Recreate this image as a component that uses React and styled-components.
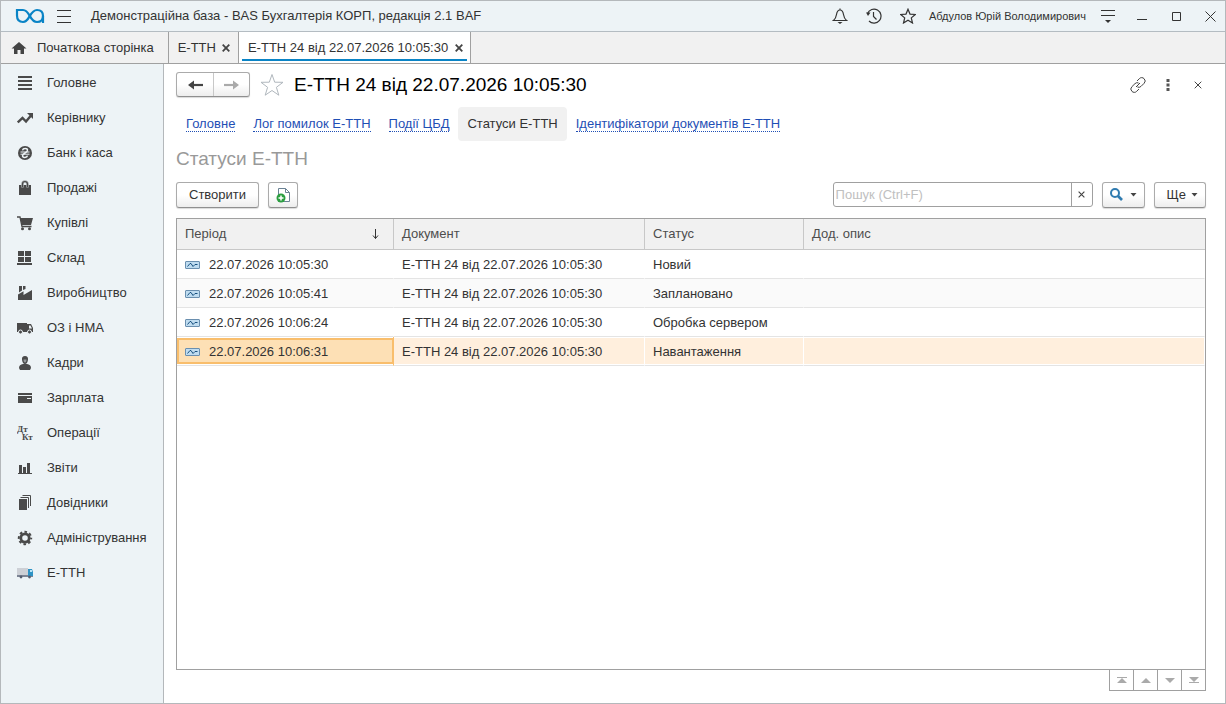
import React from 'react';
import styled, { createGlobalStyle, css } from 'styled-components';

const GlobalStyle = createGlobalStyle`
    * {
        box-sizing: border-box;
    }
    body {
        margin: 0;
        background: #fff;
        color: #333;
        font-family: "Liberation Sans", Arial, sans-serif;
        font-size: 13px;
        line-height: 16px;
    }
    button, input {
        font: inherit;
        color: inherit;
    }
    svg {
        display: block;
        flex: none;
    }
`;

const Window = styled.div`
    display: flex;
    flex-direction: column;
    min-height: 100vh;
    border: 1px solid #b4b8bb;
`;

const TitleBar = styled.header`
    display: flex;
    align-items: center;
    height: 31px;
    padding: 0 7px 0 14px;
    background: #edf3f6;
    border-bottom: 1px solid #b4bcc2;
`;

const AppName = styled.div`
    flex: 1;
    margin-left: 8px;
`;

const IconButton = styled.button`
    display: flex;
    align-items: center;
    justify-content: center;
    width: ${p => p.$width || 16}px;
    height: 20px;
    padding: 0;
    border: 0;
    background: transparent;
`;

const SystemIcons = styled.div`
    display: flex;
    align-items: center;
    gap: 18px;
`;

const UserName = styled.span`
    margin: 0 14px 0 13px;
    font-size: 11px;
`;

const Tabs = styled.nav`
    display: flex;
    height: 32px;
    background: #f1f1f1;
    border-bottom: 1px solid #a0a0a0;
`;

const Tab = styled.div`
    display: flex;
    align-items: center;
    gap: 6px;
    padding: 0 7px 0 9px;
    border-right: 1px solid #a0a0a0;

    ${p => p.$home && css`
        gap: 10px;
        padding: 0 14px 0 10px;
    `}
    ${p => p.$active && css`
        background: #fff linear-gradient(#0a84c6, #0a84c6) center bottom 2px / calc(100% - 6px) 2px no-repeat;
    `}
`;

const TabLabel = styled.button`
    padding: 0;
    border: 0;
    background: transparent;
`;

const Body = styled.div`
    display: flex;
    flex: 1;
`;

const Sidebar = styled.nav`
    flex: none;
    width: 163px;
    padding-top: 1px;
    background: #edf3f6;
    border-right: 1px solid #b4b8bb;
`;

const SideItem = styled.a`
    display: flex;
    align-items: center;
    gap: 14px;
    height: 35px;
    padding-left: 16px;
    color: #333;
    text-decoration: none;
`;

const Main = styled.main`
    display: flex;
    flex: 1;
    flex-direction: column;
    min-width: 0;
    padding: 8px 19px 12px 12px;
`;

const FormHeader = styled.div`
    display: flex;
    align-items: center;
    height: 25px;
`;

const raised = css`
    border: 1px solid #ababab;
    border-bottom-color: #8f8f8f;
    border-radius: 3px;
    background: linear-gradient(#fff 50%, #ededed);
    box-shadow: 0 1px 1px rgba(0, 0, 0, 0.15);
`;

const NavPair = styled.div`
    display: flex;
    height: 25px;
    ${raised}

    button {
        width: 36px;
        height: auto;
    }
    button + button {
        border-left: 1px solid #c8c8c8;
    }
`;

const FormTitle = styled.h1`
    flex: 1;
    margin: 0;
    color: #000;
    font-size: 19px;
    font-weight: 400;
    line-height: 24px;
`;

const FormTools = styled.div`
    display: flex;
    align-items: center;
    gap: 14px;
`;

const Links = styled.nav`
    display: flex;
    align-items: center;
    height: 34px;
    margin-top: 10px;
    padding-left: 1px;
`;

const FormLink = styled.a`
    padding: 0 9px;
    color: #1f4fb5;
    text-decoration: none;

    span {
        border-bottom: 1px dotted #1f4fb5;
    }

    ${p => p.$active && css`
        padding: 9px;
        border-radius: 4px;
        background: #f1f1f1;
        color: #333;

        span {
            border: 0;
        }
    `}
`;

const ListTitle = styled.h2`
    margin: 6px 0 0;
    color: #999;
    font-size: 19px;
    font-weight: 400;
    line-height: 24px;
`;

const Toolbar = styled.div`
    display: flex;
    align-items: center;
    gap: 9px;
    height: 27px;
    margin: 10px 0;
`;

const Button = styled.button`
    display: flex;
    align-items: center;
    justify-content: center;
    gap: 7px;
    height: 26px;
    padding: 0 ${p => p.$pad || 12}px;
    white-space: nowrap;
    ${raised}
`;

const MoreButton = styled(Button)`
    gap: 5px;
    padding: 0 7px 0 12px;
`;

const SearchBox = styled.div`
    display: flex;
    width: 260px;
    height: 25px;
    margin-left: auto;
    border: 1px solid #a0a0a0;
    border-radius: 3px;

    input {
        flex: 1;
        min-width: 0;
        padding: 0 2px;
        border: 0;
        outline: 0;
        background: transparent;
    }
    input::placeholder {
        color: #c0c0c0;
    }
    button {
        width: 21px;
        height: auto;
        border-left: 1px solid #a0a0a0;
    }
`;

const TableBox = styled.div`
    flex: 1;
    border: 1px solid #a0a0a0;
`;

const Table = styled.table`
    width: 100%;
    table-layout: fixed;
    border-collapse: separate;
    border-spacing: 0;
`;

const Col = styled.col`
    width: ${p => p.$width ? `${p.$width}px` : 'auto'};
`;

const Th = styled.th`
    height: 31px;
    padding: 0 8px;
    border-right: 1px solid #c8c8c8;
    border-bottom: 1px solid #c8c8c8;
    background: #f1f1f1;
    color: #4d4d4d;
    font-weight: 400;
    text-align: left;

    &:last-child {
        border-right: 0;
    }
`;

const HeadCell = styled.div`
    display: flex;
    align-items: center;
    justify-content: space-between;
    padding-right: 6px;
`;

const Td = styled.td`
    height: 29px;
    padding: 1px 8px 0;
    border-right: 1px solid transparent;
    border-bottom: 1px solid #e4e4e4;
`;

const Tr = styled.tr`
    &:nth-child(even) {
        background: #fafafa;
    }

    ${p => p.$selected && css`
        && {
            background: #fff;
        }
        ${Td} {
            border-right-color: #fff;
            background: #ffefdd;
            box-shadow: inset 0 1px #fff, inset 0 -1px #fff;
        }
        ${Td}:first-child {
            border-right-color: #f9be6c;
            background: #fde0b5;
            box-shadow:
                inset 0 1px #fff,
                inset 0 -1px #fff,
                inset 0 3px #f9be6c,
                inset 0 -3px #f9be6c,
                inset 2px 0 #f9be6c,
                inset -1px 0 #f9be6c;
        }
    `}
`;

const PeriodCell = styled.div`
    display: flex;
    align-items: center;
    gap: 9px;
`;

const Pager = styled.div`
    display: flex;
    align-self: flex-end;
    margin-top: -1px;
    border: 1px solid #a0a0a0;

    button {
        width: 24px;
    }
    button:first-child {
        width: 23px;
    }
    button + button {
        border-left: 1px solid #a0a0a0;
    }
`;

const Icon = ({ size = 16, width, height, children, ...rest }) => (
    <svg
        width={width || size}
        height={height || size}
        viewBox={`0 0 ${width || size} ${height || size}`}
        fill="none"
        aria-hidden="true"
        {...rest}
    >
        {children}
    </svg>
);

const Logo = () => (
    <Icon width={30} height={16} stroke="#0a84c6" strokeWidth="2.200">
        <path d="M2 1v6.500C2 12 4.500 14 8 14c7 0 6.500-12 14-12 4 0 6 2.500 6 6v7" />
        <path d="M1 2h7c7 0 6.500 12 14 12 3.500 0 6-2 6-6" />
    </Icon>
);

const Caret = () => <Icon width={7} height={4}><path d="M.5 0h6L3.500 3.500z" fill="#444" /></Icon>;

const SmallCross = ({ w = 1, size = 8 }) => (
    <Icon width={size} height={size} viewBox="0 0 8 8" stroke="#444" strokeWidth={w}><path d="M.7.7l6.600 6.600M7.300.7L.7 7.300" /></Icon>
);

const Arrow = ({ color, flip }) => (
    <Icon width={15} height={10} stroke={color} strokeWidth="2.200" transform={flip ? 'scale(-1 1)' : undefined}>
        <path d="M2 5h13" />
        <path d="M0 5l6-4.500v9z" fill={color} stroke="none" />
    </Icon>
);

const RecordIcon = () => (
    <Icon width={15} height={8}>
        <rect x=".5" y=".5" width="14" height="7" rx=".5" fill="#bfdcf0" stroke="#6a8faf" />
        <path d="M2.500 5.500L5 2.500h1l2 3 2-2h2.500" stroke="#17507f" />
    </Icon>
);

const c = '#4a4a4a';

const sections = [
    ['Головне', <path d="M1 2h14M1 6h14M1 10h14M1 14h14" stroke={c} strokeWidth="2" />],
    ['Керівнику', <>
        <path d="M.8 12.500l4.700-4.500 3.500 3.500 5-6" stroke={c} strokeWidth="2.400" />
        <path d="M10 3h6v6z" fill={c} />
    </>],
    ['Банк і каса', <>
        <circle cx="8" cy="8" r="7" fill={c} />
        <path d="M5.500 5.300C6 3 10.500 3 10.500 5.300 10.500 7.800 5.500 8.200 5.500 10.700c0 2.300 4.500 2.300 5 0" stroke="#edf3f6" strokeWidth="1.500" />
        <path d="M3.500 7h9M3.500 9.200h9" stroke="#edf3f6" />
    </>],
    ['Продажі', <>
        <path d="M2 5h12v10H2z" fill={c} />
        <path d="M5.500 7.500V4a2.500 2.500 0 0 1 5 0v3.500" stroke="#a9adaf" strokeWidth="2.600" />
        <path d="M5.500 7V4a2.500 2.500 0 0 1 5 0v3" stroke={c} strokeWidth="1.200" />
    </>],
    ['Купівлі', <>
        <path d="M0 2h3l2 9.500h9.500" stroke={c} strokeWidth="1.300" />
        <path d="M3 3h13l-2 7H5z" fill={c} />
        <circle cx="5.500" cy="13.700" r="1.500" fill={c} />
        <circle cx="12.500" cy="13.700" r="1.500" fill={c} />
    </>],
    ['Склад', <path d="M1 1h6v5H1zM8 1h6v5H8zM1 7h6v5H1zM8 7h6v5H8zM0 13h15v2H0z" fill={c} />],
    ['Виробництво', <>
        <path d="M1 15V9.500l5.500-3.300V10L15 5v10z" fill={c} />
        <path d="M2 1h3v4.500L2 7.500zM6 1h2.500v3L6 5z" fill={c} />
    </>],
    ['ОЗ і НМА', <>
        <path d="M0 3h10v9H0zM10 4h4l2 4v4h-6z" fill={c} />
        <path d="M12 5.500h1.500L15 8.500h-3z" fill="#edf3f6" />
        <circle cx="3.500" cy="12" r="2" fill={c} stroke="#edf3f6" />
        <circle cx="12.500" cy="12" r="2" fill={c} stroke="#edf3f6" />
    </>],
    ['Кадри', <>
        <path d="M8 1c-2.300 0-3.200 1.500-3 3.500C5.200 7 6.300 9 8 9s2.800-2 3-4.500C11.200 2.500 10.300 1 8 1z" fill={c} />
        <path d="M6.500 4.500h3C9.500 6.300 8.900 7.500 8 7.500s-1.500-1.200-1.500-3z" fill="#94989a" />
        <path d="M2 13c0-2.500 1.500-3.500 4-4h4c2.500.5 4 1.500 4 4l-1 2H3z" fill={c} />
    </>],
    ['Зарплата', <>
        <path d="M1 3h14v2H1zM1 6h14v7H1z" fill={c} />
        <path d="M10 8.500h4" stroke="#edf3f6" />
    </>],
    ['Операції', <g fill={c} fontFamily="Liberation Serif, serif" fontSize="9" fontWeight="700">
        <text x="0" y="7">Дт</text>
        <text x="5" y="15">Кт</text>
    </g>],
    ['Звіти', <path d="M1 13h14v1H1zM2 5h3v8H2zM6 7h3v6H6zM10 3h3v10h-3z" fill={c} />],
    ['Довідники', <>
        <path d="M2 4h8v11H2z" fill={c} />
        <path d="M3.500 2.500h8V13M5.500.5h8V11" stroke={c} />
    </>],
    ['Адміністрування', <>
        <circle cx="8" cy="8" r="4.200" stroke={c} strokeWidth="2.800" />
        <circle cx="8" cy="8" r="6.200" stroke={c} strokeWidth="2" strokeDasharray="2.600 2.270" strokeDashoffset="1.300" />
    </>],
    ['Е-ТТН', <>
        <path d="M0 3h11v7H0z" fill="#cdd0d6" />
        <path d="M0 10h16v2H0z" fill="#7c8494" />
        <path d="M11 4h4l1 3v4h-5z" fill="#2e93c5" />
        <path d="M13 5h2v2h-2z" fill="#b9e4f7" />
        <circle cx="4" cy="12" r="1.400" fill="#555d6e" />
        <circle cx="12.500" cy="12" r="1.400" fill="#555d6e" />
    </>],
];

const links = ['Головне', 'Лог помилок Е-ТТН', 'Події ЦБД', 'Статуси Е-ТТН', 'Ідентифікатори документів Е-ТТН'];

const documentName = 'Е-ТТН 24 від 22.07.2026 10:05:30';

const rows = [
    { period: '22.07.2026 10:05:30', status: 'Новий' },
    { period: '22.07.2026 10:05:41', status: 'Заплановано' },
    { period: '22.07.2026 10:06:24', status: 'Обробка сервером' },
    { period: '22.07.2026 10:06:31', status: 'Навантаження', selected: true },
];

const pagerButtons = [
    ['На початок', 'M0 1h10v1H0zM5 2l5 5H0z'],
    ['Вгору', 'M5 2l5 5H0z'],
    ['Вниз', 'M0 2h10L5 7z'],
    ['В кінець', 'M0 1h10L5 6zM0 6h10v1H0z'],
];

const TopBar = () => (
    <TitleBar>
        <Logo />
        <IconButton aria-label="Меню" $width={38}>
            <Icon width={14} height={13} stroke="#333"><path d="M0 .5h14M0 6.500h14M0 12.500h14" /></Icon>
        </IconButton>
        <AppName>Демонстраційна база - BAS Бухгалтерія КОРП, редакція 2.1 BAF</AppName>
        <SystemIcons>
            <IconButton aria-label="Сповіщення">
                <Icon stroke="#333" strokeWidth="1.200">
                    <path d="M1.500 12.500h13c-2-1.500-2.500-3-3-6C11 3.500 10 2 8 2S5 3.500 4.500 6.500c-.5 3-1 4.500-3 6zM8 2V.5" />
                    <path d="M5.500 14h5L8 16z" fill="#333" stroke="none" />
                </Icon>
            </IconButton>
            <IconButton aria-label="Історія">
                <Icon stroke="#333" strokeWidth="1.200">
                    <path d="M1.500 5.500A7 7 0 1 1 3 13M7.500 4v4.500l3 3" />
                    <path d="M0 4.500h4.500L2 8z" fill="#333" stroke="none" />
                </Icon>
            </IconButton>
            <IconButton aria-label="Обране">
                <Icon stroke="#333" strokeWidth="1.200"><path d="M8 1.200l2 4.900 5.300.4-4 3.400 1.200 5.100L8 12.300 3.500 15l1.200-5.100-4-3.400L6 6.100z" /></Icon>
            </IconButton>
        </SystemIcons>
        <UserName>Абдулов Юрій Володимирович</UserName>
        <SystemIcons>
            <IconButton aria-label="Налаштування">
                <Icon width={14} height={14} stroke="#333">
                    <path d="M0 1.500h14M0 6.500h14" />
                    <path d="M4 11h6l-3 3z" fill="#333" stroke="none" />
                </Icon>
            </IconButton>
            <IconButton aria-label="Згорнути">
                <Icon width={10} height={10} stroke="#333"><path d="M0 8.500h10" /></Icon>
            </IconButton>
            <IconButton aria-label="Розгорнути">
                <Icon width={9} height={9} stroke="#333"><path d="M.5.5h8v8h-8z" /></Icon>
            </IconButton>
            <IconButton aria-label="Закрити">
                <Icon width={11} height={11} stroke="#333"><path d="M.5.5l10 10M10.500.5l-10 10" /></Icon>
            </IconButton>
        </SystemIcons>
    </TitleBar>
);

const TabBar = () => (
    <Tabs>
        <Tab $home>
            <Icon width={16} height={14}><path d="M8 1l7.500 6.500H13V13h-3.500V9h-3v4H3V7.500H.5z" fill="#444" /></Icon>
            <TabLabel>Початкова сторінка</TabLabel>
        </Tab>
        <Tab>
            <TabLabel>Е-ТТН</TabLabel>
            <IconButton aria-label="Закрити вкладку" $width={9}><SmallCross w={1.8} /></IconButton>
        </Tab>
        <Tab $active>
            <TabLabel>{documentName}</TabLabel>
            <IconButton aria-label="Закрити вкладку" $width={9}><SmallCross w={1.8} /></IconButton>
        </Tab>
    </Tabs>
);

const StatusTable = () => (
    <TableBox>
        <Table>
            <colgroup>
                <Col $width={217} />
                <Col $width={251} />
                <Col $width={159} />
                <Col />
            </colgroup>
            <thead>
                <tr>
                    <Th>
                        <HeadCell>
                            Період
                            <Icon width={7} height={10} stroke="#333"><path d="M3.500 0v9.500M1 6.500l2.500 3 2.500-3" /></Icon>
                        </HeadCell>
                    </Th>
                    <Th>Документ</Th>
                    <Th>Статус</Th>
                    <Th>Дод. опис</Th>
                </tr>
            </thead>
            <tbody>
                {rows.map(row => (
                    <Tr key={row.period} $selected={row.selected}>
                        <Td><PeriodCell><RecordIcon />{row.period}</PeriodCell></Td>
                        <Td>{documentName}</Td>
                        <Td>{row.status}</Td>
                        <Td />
                    </Tr>
                ))}
            </tbody>
        </Table>
    </TableBox>
);

const App = () => (
    <>
        <GlobalStyle />
        <Window>
            <TopBar />
            <TabBar />
            <Body>
                <Sidebar>
                    {sections.map(([name, drawing]) => (
                        <SideItem href="#" key={name}>
                            <Icon>{drawing}</Icon>
                            {name}
                        </SideItem>
                    ))}
                </Sidebar>
                <Main>
                    <FormHeader>
                        <NavPair>
                            <IconButton aria-label="Назад"><Arrow color="#444" /></IconButton>
                            <IconButton aria-label="Вперед"><Arrow color="#aaa" flip /></IconButton>
                        </NavPair>
                        <IconButton aria-label="Додати в обране" $width={44}>
                            <Icon size={24} stroke="#b0b7bd"><path d="M12 1.500l2.700 7.700 8.300.1-6.600 5 2.400 7.900-6.800-4.700-6.800 4.700 2.400-7.900-6.600-5 8.300-.1z" /></Icon>
                        </IconButton>
                        <FormTitle>{documentName}</FormTitle>
                        <FormTools>
                            <IconButton aria-label="Посилання">
                                <Icon stroke="#444">
                                    <path d="M7 4l2.300-2.300a3.200 3.200 0 0 1 4.800 0 3.200 3.200 0 0 1 0 4.600L11 9.400a3.200 3.200 0 0 1-3.600.6M9 12l-2.300 2.300a3.200 3.200 0 0 1-4.800 0 3.200 3.200 0 0 1 0-4.600L5 6.600A3.200 3.200 0 0 1 8.600 6M6 10l4-4" />
                                </Icon>
                            </IconButton>
                            <IconButton aria-label="Ще дії">
                                <Icon width={4} height={12} fill="#555"><path d="M.5 0h3v3h-3zM.5 4.500h3v3h-3zM.5 9h3v3h-3z" /></Icon>
                            </IconButton>
                            <IconButton aria-label="Закрити"><SmallCross /></IconButton>
                        </FormTools>
                    </FormHeader>
                    <Links>
                        {links.map(link => (
                            <FormLink href="#" key={link} $active={link === 'Статуси Е-ТТН'}><span>{link}</span></FormLink>
                        ))}
                    </Links>
                    <ListTitle>Статуси Е-ТТН</ListTitle>
                    <Toolbar>
                        <Button>Створити</Button>
                        <Button $pad={7} aria-label="Створити копіюванням">
                            <Icon width={14} height={16}>
                                <path d="M2.500 1.500h7l4 4v9h-11z" fill="#fff" stroke="#6a8294" />
                                <path d="M9.500 1.500v4h4" stroke="#6a8294" />
                                <circle cx="5" cy="11" r="4.500" fill="#2c9e41" />
                                <path d="M5 8.500v5M2.500 11h5" stroke="#fff" strokeWidth="1.500" />
                            </Icon>
                        </Button>
                        <SearchBox>
                            <input type="text" aria-label="Пошук" placeholder="Пошук (Ctrl+F)" />
                            <IconButton aria-label="Очистити"><SmallCross size={7} w={1.3} /></IconButton>
                        </SearchBox>
                        <Button $pad={7} aria-label="Знайти">
                            <Icon width={13} height={13} stroke="#2f7bb0">
                                <circle cx="5" cy="5" r="4" strokeWidth="2" />
                                <path d="M8 8l4 4" strokeWidth="2.600" />
                            </Icon>
                            <Caret />
                        </Button>
                        <MoreButton>Ще<Caret /></MoreButton>
                    </Toolbar>
                    <StatusTable />
                    <Pager>
                        {pagerButtons.map(([name, d]) => (
                            <IconButton key={name} aria-label={name}>
                                <Icon width={10} height={8} fill="#aaa"><path d={d} /></Icon>
                            </IconButton>
                        ))}
                    </Pager>
                </Main>
            </Body>
        </Window>
    </>
);

export default App;
